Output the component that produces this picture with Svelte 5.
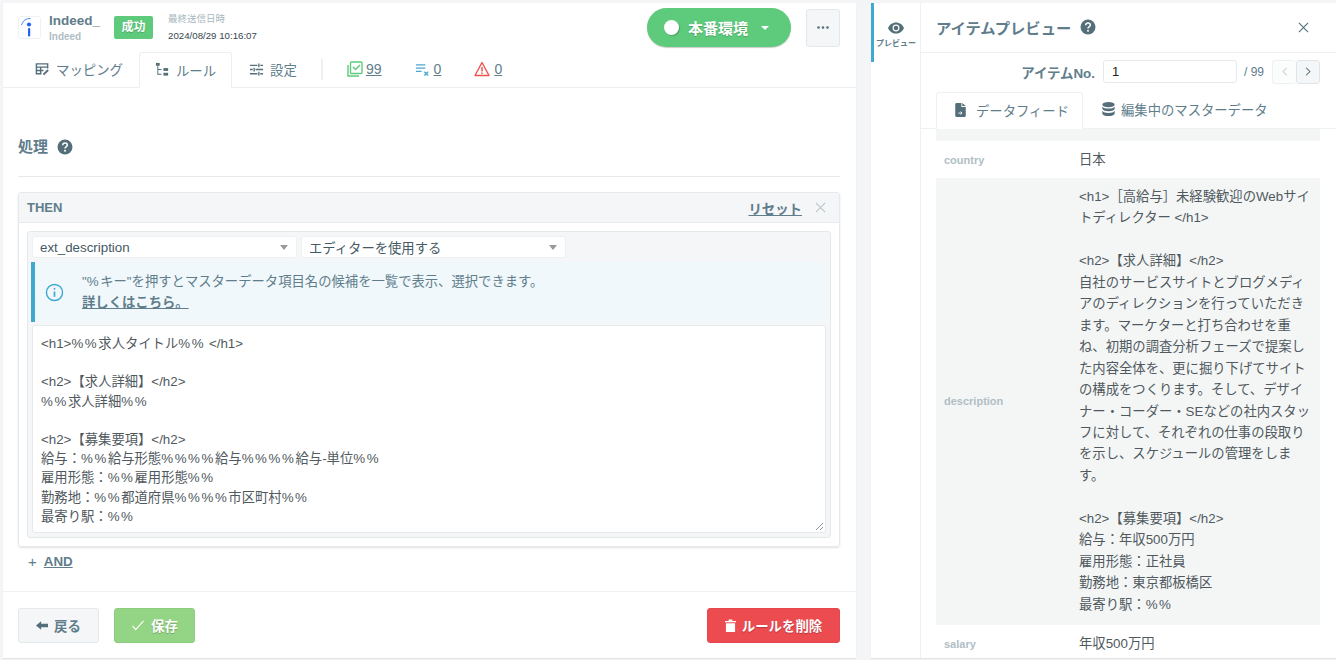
<script>
  const editorText = `<h1>%%求人タイトル%% </h1>

<h2>【求人詳細】</h2>
%%求人詳細%%

<h2>【募集要項】</h2>
給与：%%給与形態%%%%給与%%%%給与-単位%%
雇用形態：%%雇用形態%%
勤務地：%%都道府県%%%%市区町村%%
最寄り駅：%%`;
  const desc = `<h1>［高給与］未経験歓迎のWebサイトディレクター </h1>

<h2>【求人詳細】</h2>
自社のサービスサイトとブログメディアのディレクションを行っていただきます。マーケターと打ち合わせを重ね、初期の調査分析フェーズで提案した内容全体を、更に掘り下げてサイトの構成をつくります。そして、デザイナー・コーダー・SEなどの社内スタッフに対して、それぞれの仕事の段取りを示し、スケジュールの管理をします。

<h2>【募集要項】</h2>
給与：年収500万円
雇用形態：正社員
勤務地：東京都板橋区
最寄り駅：%%`;
  const pieces = (text) => text.split(/(%+)/);
</script>

<div class="page">
  <main class="left">
    <header class="top">
      <div class="logo">
        <svg viewBox="0 0 21 21" width="21" height="21">
          <path d="M2.500 8C4 3.500 7 1.500 11.500 1.500" fill="none" stroke="#4a86f0" stroke-width="1"/>
          <circle cx="10" cy="7.500" r="2.100" fill="#2164f3"/>
          <rect x="9" y="11" width="2.200" height="8.500" rx="1" fill="#2164f3"/>
        </svg>
      </div>
      <div class="names">
        <div class="name">Indeed_</div>
        <div class="sub">Indeed</div>
      </div>
      <span class="badge">成功</span>
      <div class="sent">
        <div class="sent-label">最終送信日時</div>
        <div class="sent-date">2024/08/29 10:16:07</div>
      </div>
      <div class="spacer"></div>
      <button class="env"><span class="dot"></span><span>本番環境</span><span class="caret-white"></span></button>
      <button class="more" aria-label="その他">
        <svg viewBox="0 0 12 3" width="12" height="3" fill="#546e7a"><circle cx="1.500" cy="1.500" r="1.300"/><circle cx="6" cy="1.500" r="1.300"/><circle cx="10.500" cy="1.500" r="1.300"/></svg>
      </button>
    </header>

    <nav class="tabs">
      <div class="tab">
        <svg viewBox="0 0 16 16" width="15" height="15" fill="none" stroke="#546e7a" stroke-width="1.500"><path d="M13.500 7V2H1.500v10.500H7M1.500 5.500h12M6 5.500v7M1.500 9H9"/><path d="M9 13.500l5-5" stroke-width="2"/></svg>
        <span>マッピング</span>
      </div>
      <div class="tab active">
        <svg viewBox="0 0 16 16" width="15" height="15" fill="#546e7a"><rect x="1" y="1" width="4" height="3"/><path d="M2.500 4h1v9.500h-1z"/><path d="M3 7.500h4v1H3zM3 12.500h4v1H3z"/><rect x="9" y="6.500" width="5" height="3"/><rect x="9" y="11.500" width="5" height="3"/></svg>
        <span>ルール</span>
      </div>
      <div class="tab">
        <svg viewBox="0 0 16 16" width="15" height="15" fill="none" stroke="#546e7a" stroke-width="1.400"><path d="M1 3.500h8M12 3.500h3M1 8h3M7 8h8M1 12.500h8M12 12.500h3M10.500 1.500v4M5.500 6v4M10.500 10.500v4"/></svg>
        <span>設定</span>
      </div>
      <div class="tab-sep"></div>
      <div class="stat s1">
        <svg viewBox="0 0 16 16" width="16" height="16" fill="none" stroke="#5ecb7c" stroke-width="1.400"><path d="M1 4v11h11"/><rect x="3.500" y="1" width="11.500" height="11.500" rx="1"/><path d="M6 6l2.500 2.500L13 4" stroke-width="1.500"/></svg>
        <a href="#a">99</a>
      </div>
      <div class="stat s2">
        <svg viewBox="0 0 16 16" width="15" height="15" fill="none" stroke="#4aa8cf" stroke-width="1.400"><path d="M1 3h10M1 6.500h10M1 10h6"/><path d="M10 10.500l4 4M14 10.500l-4 4" stroke-width="1.500"/></svg>
        <a href="#a">0</a>
      </div>
      <div class="stat s3">
        <svg viewBox="0 0 16 16" width="16" height="16" fill="none" stroke="#ef5350" stroke-width="1.400"><path d="M8 1.500L15 14.500H1z" stroke-linejoin="round"/><path d="M8 6v4.500M8 11.500v1.500" stroke-width="1.500"/></svg>
        <a href="#a">0</a>
      </div>
    </nav>

    <section class="body">
      <h2 class="section">処理
        <svg class="help" viewBox="0 0 16 16" width="16" height="16"><circle cx="8" cy="8" r="7.500" fill="#546e7a"/><path d="M5.700 6.200C5.800 4.800 6.800 4.100 8 4.100c1.300 0 2.300.8 2.300 2 0 1.700-2.300 1.700-2.300 3.300" fill="none" stroke="#fff" stroke-width="1.500"/><circle cx="8" cy="11.700" r="1" fill="#fff"/></svg>
      </h2>
      <div class="card">
        <div class="card-head">
          <span class="then">THEN</span>
          <a class="reset" href="#a">リセット</a>
          <svg class="x" viewBox="0 0 12 12" width="11" height="11" fill="none" stroke="#b9c6cc" stroke-width="1.200"><path d="M1 1l10 10M11 1L1 11"/></svg>
        </div>
        <div class="card-body">
          <div class="inner">
            <div class="selects">
              <div class="select s-a"><span>ext_description</span><i class="caret"></i></div>
              <div class="select s-b"><span>エディターを使用する</span><i class="caret"></i></div>
            </div>
            <div class="info">
              <svg viewBox="0 0 20 20" width="19" height="19" fill="none" stroke="#3fa9d0" stroke-width="1.500"><circle cx="10" cy="10" r="8.500"/><path d="M10 9v5.500" stroke-width="1.800"/><circle cx="10" cy="6" r="1" fill="#3fa9d0" stroke="none"/></svg>
              <div class="info-text">
                <div>"<span class="pct">%</span>キー"を押すとマスターデータ項目名の候補を一覧で表示、選択できます。</div>
                <a href="#a">詳しくはこちら。</a>
              </div>
            </div>
            <div class="editor">
              <pre>{#each pieces(editorText) as part, i}{#if i % 2}<span class="pct">{part}</span>{:else}{part}{/if}{/each}</pre>
              <svg class="grip" viewBox="0 0 10 10" width="10" height="10" fill="none" stroke="#777" stroke-width="0.800"><path d="M2 9l7-7M6 9l3-3"/></svg>
            </div>
          </div>
        </div>
      </div>
      <div class="and"><span class="plus">+</span><a href="#a">AND</a></div>
    </section>

    <footer class="foot">
      <button class="btn back">
        <svg viewBox="0 0 14 12" width="12" height="11" fill="#546e7a"><path d="M0 6l6-5v3h8v4H6v3z"/></svg>
        戻る
      </button>
      <button class="btn save">
        <svg viewBox="0 0 14 12" width="14" height="11" fill="none" stroke="#fff" stroke-width="1.200"><path d="M1 6.500l3.500 4L13 1"/></svg>
        保存
      </button>
      <div class="spacer"></div>
      <button class="btn del">
        <svg viewBox="0 0 12 14" width="11" height="13" fill="#fff"><path d="M0 2h4V.500h4V2h4v1.500H0zM1 4.500h10V14H1z"/></svg>
        ルールを削除
      </button>
    </footer>
  </main>

  <aside class="right">
    <div class="rail">
      <div class="rail-item">
        <svg viewBox="0 0 20 14" width="16" height="12"><path d="M10 0C5.500 0 1.800 2.800 0 7c1.800 4.200 5.500 7 10 7s8.200-2.800 10-7c-1.800-4.200-5.500-7-10-7z" fill="#546e7a"/><circle cx="10" cy="7" r="4.300" fill="#fff"/><circle cx="10" cy="7" r="2.800" fill="#546e7a"/></svg>
        <span>プレビュー</span>
      </div>
    </div>
    <div class="preview">
      <div class="p-head">
        <span class="p-title">アイテムプレビュー</span>
        <svg class="help" viewBox="0 0 16 16" width="16" height="16"><circle cx="8" cy="8" r="7.500" fill="#546e7a"/><path d="M5.700 6.200C5.800 4.800 6.800 4.100 8 4.100c1.300 0 2.300.8 2.300 2 0 1.700-2.300 1.700-2.300 3.300" fill="none" stroke="#fff" stroke-width="1.500"/><circle cx="8" cy="11.700" r="1" fill="#fff"/></svg>
        <div class="spacer"></div>
        <svg viewBox="0 0 12 12" width="11" height="11" fill="none" stroke="#546e7a" stroke-width="1.200"><path d="M1 1l10 10M11 1L1 11"/></svg>
      </div>
      <div class="pager">
        <label for="itemno">アイテムNo.</label>
        <input id="itemno" value="1" />
        <span class="total">/ 99</span>
        <div class="pg">
          <button class="pg-btn dis" aria-label="前へ"><svg viewBox="0 0 8 12" width="6" height="9" fill="none" stroke="#c3ced3" stroke-width="1.400"><path d="M6.500 1L1.500 6l5 5"/></svg></button>
          <button class="pg-btn" aria-label="次へ"><svg viewBox="0 0 8 12" width="6" height="9" fill="none" stroke="#546e7a" stroke-width="1.400"><path d="M1.500 1l5 5-5 5"/></svg></button>
        </div>
      </div>
      <div class="p-tabs">
        <div class="p-tab active">
          <svg viewBox="0 0 12 16" width="11" height="14"><path d="M0 1.500A1.500 1.500 0 0 1 1.500 0H7v4.500h5v10A1.500 1.500 0 0 1 10.500 16h-9A1.500 1.500 0 0 1 0 14.500z" fill="#546e7a"/><path d="M8 0l4 3.500H8z" fill="#546e7a"/><path d="M3.500 11.500h4M6 9.800l1.800 1.700L6 13.200" fill="none" stroke="#fff"/></svg>
          <span>データフィード</span>
        </div>
        <div class="p-tab second">
          <svg viewBox="0 0 14 16" width="13" height="14" fill="#546e7a"><ellipse cx="7" cy="3" rx="7" ry="3"/><path d="M0 5c1 1.800 3.500 2.500 7 2.500S13 6.800 14 5v3c-1 1.800-3.500 2.500-7 2.500S1 9.800 0 8z"/><path d="M0 10c1 1.800 3.500 2.500 7 2.500s6-.7 7-2.500v3c0 1.700-3 3-7 3s-7-1.300-7-3z"/></svg>
          <span>編集中のマスターデータ</span>
        </div>
      </div>
      <div class="table">
        <div class="strip"></div>
        <div class="row"><div class="k">country</div><div class="v">日本</div></div>
        <div class="row alt"><div class="k">description</div><div class="v pre">{#each pieces(desc) as part, i}{#if i % 2}<span class="pct">{part}</span>{:else}{part}{/if}{/each}</div></div>
        <div class="row"><div class="k">salary</div><div class="v">年収500万円</div></div>
      </div>
    </div>
  </aside>
</div>

<style>
  :global(body) {
    margin: 0;
    background: #f3f5f7;
    font-family: "Liberation Sans", "Noto Sans CJK JP", sans-serif;
    color: #455a64;
  }
  .page {
    width: 1336px;
    height: 660px;
    display: flex;
    overflow: hidden;
    box-sizing: border-box;
    padding: 3px 0 2px 3px;
  }
  .spacer { flex: 1; }
  .pct { letter-spacing: 1.600px; }
  .left {
    width: 853px;
    background: #fff;
    display: flex;
    flex-direction: column;
    box-shadow: 0 1px 1px rgba(0, 0, 0, 0.07);
  }
  .top {
    height: 49px;
    display: flex;
    align-items: center;
    padding: 0 16px 0 15px;
    flex: none;
    box-sizing: border-box;
  }
  .logo {
    width: 23px;
    height: 23px;
    border: 1px solid #eef2f8;
    border-radius: 3px;
    box-sizing: border-box;
    display: flex;
    align-items: center;
    justify-content: center;
    margin-right: 8px;
  }
  .name { font-size: 13.500px; font-weight: 700; color: #607d8b; line-height: 18px; }
  .sub { font-size: 10px; font-weight: 700; color: #b0bec5; line-height: 13px; }
  .names { width: 65px; }
  .badge {
    background: #5ecb7c;
    color: #fff;
    font-size: 12px;
    font-weight: 700;
    width: 39px;
    height: 23px;
    line-height: 23px;
    text-align: center;
    border-radius: 2px;
    margin-right: 15px;
    text-shadow: 0 1px 1px rgba(0,0,0,.2);
  }
  .sent-label { font-size: 9.500px; color: #a9b7be; line-height: 14px; }
  .sent-date { font-size: 9.700px; color: #37474f; line-height: 16px; margin-top: 2px; }
  .env {
    width: 144px;
    height: 39px;
    border: 0;
    border-radius: 20px;
    background: #5ecb7c;
    color: #fff;
    font: 700 15px "Liberation Sans", "Noto Sans CJK JP", sans-serif;
    display: flex;
    align-items: center;
    padding: 0 0 0 17px;
    box-shadow: 0 1px 1px rgba(0,0,0,.2);
    text-shadow: 0 1px 1px rgba(0,0,0,.2);
    margin-right: 15px;
  }
  .dot { width: 15px; height: 15px; border-radius: 50%; background: #fff; margin-right: 9px; box-shadow: 1px 1px 1px rgba(0,0,0,.2); }
  .caret-white { border: 4px solid transparent; border-top-color: #fff; border-bottom: 0; margin-left: 13px; }
  .more {
    width: 34px;
    height: 38px;
    background: #f4f6f8;
    border: 1px solid #e3e8eb;
    border-radius: 3px;
    padding: 0;
    display: flex;
    align-items: center;
    justify-content: center;
  }
  .tabs {
    height: 36px;
    flex: none;
    display: flex;
    align-items: stretch;
    padding-left: 15px;
    box-sizing: border-box;
    border-bottom: 1px solid #eceff1;
  }
  .tab {
    width: 93px;
    height: 36px;
    display: flex;
    align-items: center;
    justify-content: center;
    gap: 6px;
    font-size: 13.400px;
    color: #607d8b;
    box-sizing: border-box;
    padding-bottom: 2px;
  }
  .tab:nth-child(1) { width: 121px; padding-left: 1px; }
  .tab:nth-child(3) { width: 82px; }
  .tab.active {
    background: #fff;
    border: 1px solid #eceff1;
    border-bottom: 0;
    border-radius: 3px 3px 0 0;
  }
  .tab-sep { width: 2px; height: 21px; background: #eef1f3; align-self: center; margin: 0 24px 0 7px; }
  .stat { display: flex; align-items: center; gap: 4px; font-size: 14px; padding-bottom: 1px; }
  .stat a { color: #607d8b; }
  .s1 { gap: 3px; }
  .s2 { margin-left: 33px; }
  .s3 { margin-left: 33px; }
  .body { flex: 1; padding: 0 16px 0 15px; box-sizing: border-box; }
  .section {
    margin: 45px 0 15px;
    box-sizing: content-box;
    font-size: 15px;
    font-weight: 700;
    color: #607d8b;
    line-height: 28px;
    border-bottom: 1px solid #e6eaec;
    display: flex;
    align-items: center;
    gap: 9px;
    height: 28px;
    padding-bottom: 15px;
  }
  .card {
    border: 1px solid #e6eaed;
    border-radius: 3px;
    box-shadow: 0 1px 2px rgba(0,0,0,.12);
    box-sizing: border-box;
    height: 355px;
  }
  .card-head {
    height: 30px;
    background: #f4f6f8;
    border-bottom: 1px solid #e6eaed;
    box-sizing: border-box;
    display: flex;
    align-items: center;
    padding: 0 13px 0 8px;
    gap: 13px;
  }
  .then { flex: 1; font-size: 13px; font-weight: 700; color: #607d8b; }
  .reset { font-size: 13.400px; font-weight: 700; color: #607d8b; }
  .card-body { padding: 8px; }
  .inner {
    background: #f4f6f8;
    border: 1px solid #e3e8eb;
    border-radius: 3px;
    box-sizing: border-box;
    height: 307px;
    padding: 4px 4px 0 4px;
  }
  .selects { display: flex; gap: 4px; margin-bottom: 4px; }
  .select {
    height: 22px;
    background: #fff;
    border-radius: 3px;
    border: 1px solid #eef1f3;
    box-sizing: border-box;
    display: flex;
    align-items: center;
    justify-content: space-between;
    padding: 0 8px 0 7px;
    font-size: 13.330px;
    color: #455a64;
  }
  .s-a { width: 265px; }
  .s-b { width: 265px; }
  .caret { border: 4px solid transparent; border-top: 5px solid #999; border-bottom: 0; }
  .info {
    height: 60px;
    background: #f0f8fb;
    border-left: 4px solid #3fa9d0;
    box-sizing: border-box;
    display: flex;
    align-items: center;
    padding-left: 10px;
    gap: 18px;
    margin-left: -1px;
    font-size: 13.330px;
    color: #607d8b;
    line-height: 21px;
  }
  .info a { color: #607d8b; font-weight: 700; }
  .editor {
    position: relative;
    height: 208px;
    margin-top: 3px;
    background: #fff;
    border: 1px solid #e6eaed;
    border-radius: 3px;
    box-sizing: border-box;
    padding: 8px;
    overflow: hidden;
  }
  .editor pre {
    margin: 0;
    font: 13.330px/19.200px "Liberation Sans", "Noto Sans CJK JP", sans-serif;
    color: #50595e;
  }
  .grip { position: absolute; right: 1px; bottom: 1px; }
  .and { display: flex; align-items: center; padding-left: 10px; gap: 7px; margin-top: 4px; height: 20px; font-size: 13.330px; }
  .plus { font-size: 15px; color: #607d8b; }
  .and a { color: #607d8b; font-weight: 700; }
  .foot {
    height: 67px;
    flex: none;
    display: flex;
    align-items: center;
    padding: 0 16px 0 15px;
    border-top: 1px solid #eef1f3;
    box-sizing: border-box;
    gap: 15px;
  }
  .btn {
    height: 35px;
    border-radius: 3px;
    font: 700 13.400px "Liberation Sans", "Noto Sans CJK JP", sans-serif;
    display: flex;
    align-items: center;
    justify-content: center;
    gap: 6px;
    padding: 0;
    box-sizing: border-box;
  }
  .back { width: 81px; background: #f4f6f8; border: 1px solid #e3e8eb; color: #607d8b; }
  .save { width: 81px; background: #94d585; border: 1px solid #8ccd7f; color: #fff; text-shadow: 0 1px 1px rgba(0,0,0,.25); }
  .del { width: 133px; background: #ec4b50; border: 1px solid #e4474c; color: #fff; text-shadow: 0 1px 1px rgba(0,0,0,.25); }
  .right {
    width: 465px;
    margin-left: 15px;
    background: #fff;
    display: flex;
    box-shadow: 0 1px 1px rgba(0,0,0,.07);
  }
  .rail { width: 50px; flex: none; border-right: 1px solid #eef1f3; box-sizing: border-box; }
  .rail-item {
    height: 59px;
    border-left: 3px solid #3fa9d0;
    box-sizing: border-box;
    display: flex;
    flex-direction: column;
    align-items: center;
    padding-top: 19px;
    gap: 3px;
    color: #607d8b;
    font-size: 8px;
    font-weight: 700;
    padding-right: 2px;
  }
  .preview { flex: 1; display: flex; flex-direction: column; min-width: 0; overflow: hidden; }
  .p-head {
    height: 50px;
    flex: none;
    display: flex;
    align-items: center;
    gap: 9px;
    padding: 0 27px 1px 15px;
    border-bottom: 1px solid #eef1f3;
    box-sizing: border-box;
  }
  .p-title { font-size: 15.300px; font-weight: 700; color: #607d8b; }
  .pager {
    height: 39px;
    flex: none;
    display: flex;
    align-items: center;
    justify-content: flex-end;
    padding: 0 16px 2px 0;
    box-sizing: border-box;
  }
  .pager label { font-size: 13.400px; font-weight: 700; color: #607d8b; margin-right: 8px; }
  .pager input {
    width: 134px;
    height: 23px;
    box-sizing: border-box;
    border: 1px solid #e6eaed;
    border-radius: 3px;
    padding: 0 8px;
    font: 13px "Liberation Sans", sans-serif;
    color: #222;
    margin-right: 7px;
  }
  .total { font-size: 12px; color: #607d8b; margin-right: 8px; }
  .pg { display: flex; }
  .pg-btn {
    width: 24px;
    height: 24px;
    background: #f4f6f8;
    border: 1px solid #dfe5e8;
    border-radius: 3px;
    padding: 0;
    display: flex;
    align-items: center;
    justify-content: center;
  }
  .pg-btn.dis { background: #fbfcfc; border-color: #eef1f3; border-right: 0; }
  .p-tabs {
    height: 37px;
    flex: none;
    display: flex;
    padding-left: 15px;
    border-bottom: 1px solid #eef1f3;
    box-sizing: border-box;
  }
  .p-tab {
    display: flex;
    align-items: center;
    gap: 10px;
    font-size: 13.330px;
    color: #607d8b;
    padding: 0 0 2px 18px;
    box-sizing: border-box;
    height: 36px;
    white-space: nowrap;
  }
  .p-tab.second { padding-left: 19px; gap: 6px; }
  .p-tab.active {
    width: 147px;
    height: 37px;
    background: #fff;
    border: 1px solid #eef1f3;
    border-bottom: 0;
    border-radius: 3px 3px 0 0;
  }
  .table { padding: 0 16px 0 15px; }
  .strip { height: 12px; background: #f4f6f6; }
  .row { display: flex; align-items: center; min-height: 37px; }
  .row.alt { background: #f4f6f6; padding: 8px 0 10px; }
  .k { width: 143px; padding-left: 8px; box-sizing: border-box; font-size: 11px; font-weight: 700; color: #b0bec5; flex: none; }
  .v { width: 232px; font-size: 13.330px; line-height: 21.450px; color: #50595e; }
  .pre { white-space: pre-wrap; word-break: break-all; }
</style>
